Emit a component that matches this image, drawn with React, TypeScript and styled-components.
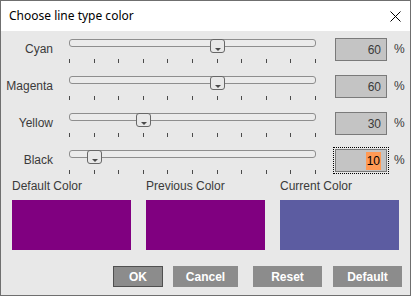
import styled, { createGlobalStyle } from 'styled-components'

const GlobalStyle = createGlobalStyle`
  html, body {
    margin: 0;
    padding: 0;
    background: #ffffff;
  }
`

const Window = styled.div`
  width: 411px;
  height: 296px;
  box-sizing: border-box;
  border: 1px solid #6f6f6f;
  display: flex;
  flex-direction: column;
  background: #e8e8e8;
  font-family: 'Liberation Sans', Arial, sans-serif;
  font-size: 12px;
  color: #3a3a3a;
`

const TitleBar = styled.div`
  height: 30px;
  flex-shrink: 0;
  background: #ffffff;
  display: flex;
  align-items: center;
  justify-content: space-between;
  padding: 0 9px 0 8px;
`

const Title = styled.div`
  font-family: 'Noto Sans', 'Open Sans', sans-serif;
  font-size: 12px;
  color: #000000;
  padding-bottom: 2px;
`

const CloseButton = styled.svg`
  width: 11px;
  height: 11px;
  margin-top: 1px;
`

const Content = styled.div`
  flex: 1;
  display: flex;
  flex-direction: column;
  padding-top: 7px;
`

const Rows = styled.div`
  display: flex;
  flex-direction: column;
  gap: 12px;
`

const Row = styled.div`
  display: flex;
  align-items: flex-start;
  height: 25px;
`

const Label = styled.div`
  width: 52px;
  height: 23px;
  line-height: 23px;
  text-align: right;
  margin-right: 16px;
  color: #3a3a3a;
`

const Slider = styled.div`
  position: relative;
  width: 247px;
  height: 25px;
  margin-right: 19px;
`

const Track = styled.div`
  margin-top: 1px;
  height: 8px;
  box-sizing: border-box;
  border: 1px solid #8e8e8e;
  border-radius: 3px;
  background: #ebebeb;
`

const Ticks = styled.div`
  display: flex;
  justify-content: space-between;
  margin-top: 12px;
`

const Tick = styled.div`
  width: 1px;
  height: 4px;
  background: #4a4a4a;
`

const Thumb = styled.div`
  position: absolute;
  top: 1px;
  width: 15px;
  height: 14px;
  box-sizing: border-box;
  border: 1px solid #676767;
  border-radius: 3px;
  background: #e8e8e8;

  &::after {
    content: '';
    position: absolute;
    left: 4px;
    top: 8px;
    border-left: 3px solid transparent;
    border-right: 3px solid transparent;
    border-top: 3px solid #4a4a4a;
  }
`

const ValueBox = styled.div<{ $focused?: boolean }>`
  width: 52px;
  height: 23px;
  box-sizing: border-box;
  border: 1px solid #7a7a7a;
  background: #c4c4c4;
  display: flex;
  align-items: center;
  justify-content: flex-end;
  padding-right: 5px;
  margin-right: 7px;
  color: #3a3a3a;
  outline: ${(p) => (p.$focused ? '1px dotted #000000' : 'none')};
  outline-offset: 1px;
`

const Selected = styled.span`
  background: #ff9a55;
  color: #000000;
  padding: 2px 1px;
`

const Percent = styled.div`
  height: 23px;
  line-height: 23px;
`

const Swatches = styled.div`
  display: grid;
  grid-template-columns: repeat(3, 119px);
  column-gap: 15px;
  padding-left: 11px;
  margin-top: 5px;
`

const SwatchColumn = styled.div`
  display: flex;
  flex-direction: column;
  gap: 7px;
`

const SwatchLabel = styled.div`
  height: 14px;
  line-height: 14px;
`

const Swatch = styled.div<{ $color: string }>`
  height: 50px;
  background: ${(p) => p.$color};
`

const Buttons = styled.div`
  display: flex;
  justify-content: flex-end;
  padding-right: 8px;
  margin-top: 16px;
`

const Button = styled.button<{ $w: number; $ml: number; $default?: boolean }>`
  width: ${(p) => p.$w}px;
  height: 21px;
  margin-left: ${(p) => p.$ml}px;
  box-sizing: border-box;
  border: 1px solid ${(p) => (p.$default ? '#505050' : '#8c8c8c')};
  background: #8c8c8c;
  color: #ffffff;
  font-family: 'Liberation Sans', Arial, sans-serif;
  font-size: 12px;
  font-weight: bold;
  padding: 0;
`

const channels = [
  { name: 'Cyan', value: 60 },
  { name: 'Magenta', value: 60 },
  { name: 'Yellow', value: 30 },
  { name: 'Black', value: 10, focused: true },
]

const c = channels.map((ch) => ch.value / 100)
const current = `rgb(${Math.round(255 * (1 - c[0]) * (1 - c[3]))}, ${Math.round(
  255 * (1 - c[1]) * (1 - c[3])
)}, ${Math.round(255 * (1 - c[2]) * (1 - c[3]))})`

const swatches = [
  { label: 'Default Color', color: '#800080' },
  { label: 'Previous Color', color: '#800080' },
  { label: 'Current Color', color: current },
]

const buttons = [
  { text: 'OK', w: 50, ml: 0, def: true },
  { text: 'Cancel', w: 65, ml: 10 },
  { text: 'Reset', w: 69, ml: 15 },
  { text: 'Default', w: 69, ml: 11 },
]

const App = () => {
  return (
    <>
      <GlobalStyle />
      <Window>
        <TitleBar>
          <Title>Choose line type color</Title>
          <CloseButton viewBox="0 0 11 11">
            <path d="M0.5 0.5 L10.5 10.5 M10.5 0.5 L0.5 10.5" stroke="#000" strokeWidth="1" fill="none" />
          </CloseButton>
        </TitleBar>
        <Content>
          <Rows>
            {channels.map((ch) => (
              <Row key={ch.name}>
                <Label>{ch.name}</Label>
                <Slider>
                  <Track />
                  <Ticks>
                    {Array.from({ length: 11 }).map((_, i) => (
                      <Tick key={i} />
                    ))}
                  </Ticks>
                  <Thumb style={{ left: (ch.value / 100) * 247 - 7 }} />
                </Slider>
                <ValueBox $focused={ch.focused}>
                  {ch.focused ? <Selected>{ch.value}</Selected> : ch.value}
                </ValueBox>
                <Percent>%</Percent>
              </Row>
            ))}
          </Rows>
          <Swatches>
            {swatches.map((s) => (
              <SwatchColumn key={s.label}>
                <SwatchLabel>{s.label}</SwatchLabel>
                <Swatch $color={s.color} />
              </SwatchColumn>
            ))}
          </Swatches>
          <Buttons>
            {buttons.map((b) => (
              <Button key={b.text} $w={b.w} $ml={b.ml} $default={b.def}>
                {b.text}
              </Button>
            ))}
          </Buttons>
        </Content>
      </Window>
    </>
  )
}

export default App
